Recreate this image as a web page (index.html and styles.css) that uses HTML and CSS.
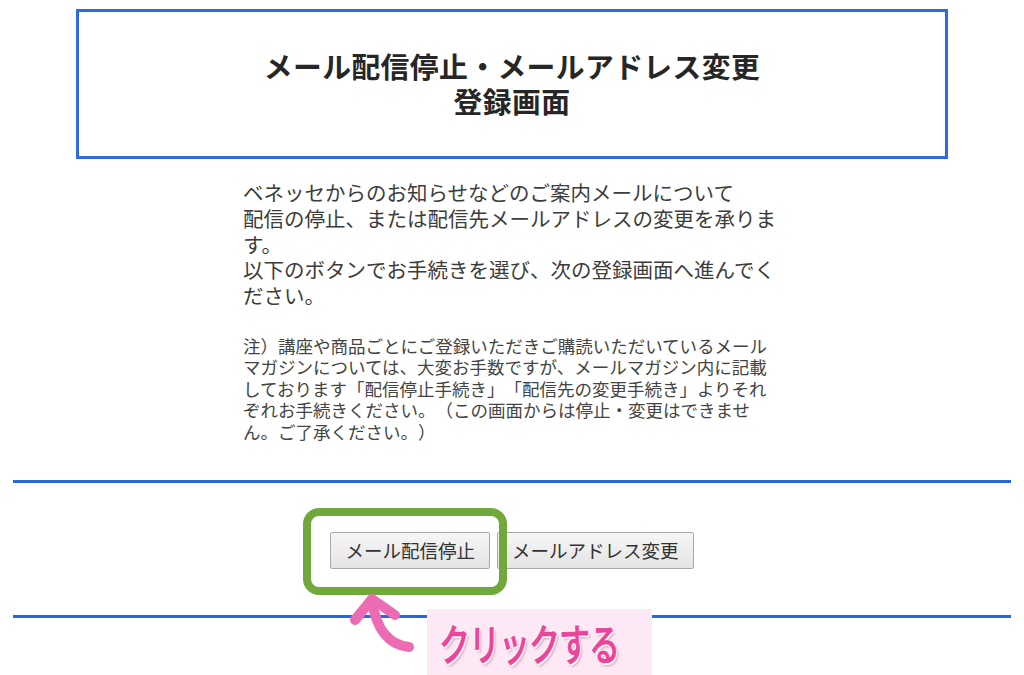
FILE: index.html
```html
<!DOCTYPE html>
<html lang="ja">
<head>
<meta charset="utf-8">
<title>メール配信停止・メールアドレス変更 登録画面</title>
<link rel="stylesheet" href="styles.css">
</head>
<body>
<div class="page">
  <header class="title-box">
    <h1 class="title">メール配信停止・メールアドレス変更<br>登録画面</h1>
  </header>

  <section class="content">
    <p class="intro">ベネッセからのお知らせなどのご案内メールについて<br>配信の停止、または配信先メールアドレスの変更を承ります。<br>以下のボタンでお手続きを選び、次の登録画面へ進んでください。</p>
    <p class="note">注）講座や商品ごとにご登録いただきご購読いただいているメール<br>マガジンについては、大変お手数ですが、メールマガジン内に記載<br>しております「配信停止手続き」「配信先の変更手続き」よりそれ<br>ぞれお手続きください。（この画面からは停止・変更はできませ<br>ん。ご了承ください。）</p>
  </section>

  <hr class="rule rule-top">

  <div class="actions">
    <button class="btn" type="button">メール配信停止</button>
    <button class="btn" type="button">メールアドレス変更</button>
  </div>

  <hr class="rule rule-bottom">

  <div class="highlight"></div>
  <svg class="arrow" width="80" height="70" viewBox="340 590 80 70" aria-hidden="true">
    <path d="M355 620 L372 599 L395 615" fill="none" stroke="#ec6cb3" stroke-width="10" stroke-linecap="round" stroke-linejoin="round"/>
    <path d="M372 601 C376 628 388 645 409 647" fill="none" stroke="#ec6cb3" stroke-width="10" stroke-linecap="round"/>
  </svg>
  <div class="callout"><span class="callout-text">クリックする</span></div>
</div>
</body>
</html>
```

FILE: styles.css
```css
* {
  box-sizing: border-box;
}

html, body {
  margin: 0;
  padding: 0;
  background: #ffffff;
}

body {
  font-family: "Noto Sans CJK JP", "Noto Sans", sans-serif;
  color: #3a3a3a;
  width: 1024px;
  height: 675px;
  overflow: hidden;
  text-spacing-trim: space-all;
}

.page {
  position: relative;
  width: 1024px;
  height: 675px;
  padding-top: 9px;
}

.title-box {
  margin: 0 76px;
  height: 150px;
  border: 3px solid #2c6be0;
  display: flex;
  align-items: center;
  justify-content: center;
}

.title {
  margin: 0 0 3px;
  font-size: 28.8px;
  line-height: 35px;
  font-weight: 700;
  color: #262626;
  text-align: center;
  letter-spacing: 0.4px;
}

.content {
  margin: 21px 0 0 243px;
  width: 560px;
}

.intro {
  margin: 0;
  font-size: 20.5px;
  line-height: 25.8px;
  color: #3c3c3c;
  width: 540px;
}

.note {
  margin: 26px 0 0;
  font-size: 17.5px;
  line-height: 21.5px;
  color: #444444;
  white-space: nowrap;
}

.rule {
  border: 0;
  height: 3px;
  background: #2a67da;
  margin-left: 13px;
  margin-right: 13px;
}

.rule-top {
  margin-top: 38px;
  margin-bottom: 0;
}

.actions {
  display: flex;
  justify-content: center;
  gap: 7px;
  margin-top: 49px;
}

.btn {
  height: 37px;
  padding: 0 14px;
  font-family: "Noto Sans CJK JP", sans-serif;
  font-size: 18.5px;
  color: #333333;
  background: linear-gradient(#f6f6f6, #e4e4e4);
  border: 1px solid #a9a9a9;
  border-radius: 2px;
  line-height: 35px;
}

.rule-bottom {
  margin-top: 46px;
  margin-bottom: 0;
}

.highlight {
  position: absolute;
  left: 303px;
  top: 508px;
  width: 204px;
  height: 87px;
  border: 8px solid #70a83c;
  border-radius: 16px;
}

.arrow {
  position: absolute;
  left: 340px;
  top: 590px;
}

.callout {
  position: absolute;
  left: 427px;
  top: 609px;
  width: 225px;
  height: 66px;
  background: #fde9f5;
  display: flex;
  align-items: center;
  padding-left: 12px;
}

.callout-text {
  display: inline-block;
  font-family: "Noto Sans CJK JP", sans-serif;
  font-size: 31px;
  font-weight: 500;
  color: #e8459b;
  letter-spacing: -1px;
  transform: scaleY(1.4);
  transform-origin: center;
  -webkit-text-stroke: 0.5px #e8459b;
  text-shadow: 0 0 2px #ffffff, 1px 1px 0 #ffffff, -1px -1px 0 #ffffff, 2px 2px 2px rgba(120, 40, 80, 0.35);
}
```
